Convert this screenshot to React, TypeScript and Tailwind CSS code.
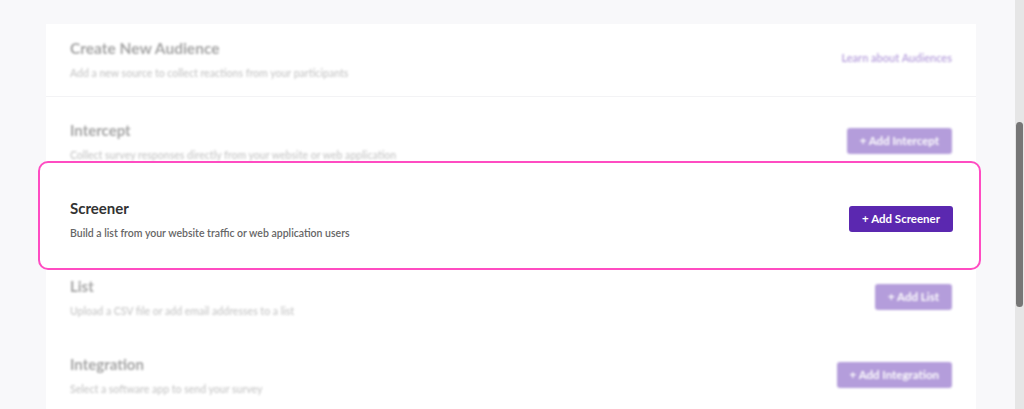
import React from 'react';

interface Row {
    title: string;
    subtitle: string;
    action: string;
}

const rowsAbove: Row[] = [
    { title: 'Intercept', subtitle: 'Collect survey responses directly from your website or web application', action: '+ Add Intercept' },
];

const rowsBelow: Row[] = [
    { title: 'List', subtitle: 'Upload a CSV file or add email addresses to a list', action: '+ Add List' },
    { title: 'Integration', subtitle: 'Select a software app to send your survey', action: '+ Add Integration' },
];

const font = { fontFamily: 'Lato, "Open Sans", sans-serif' };

const AudienceRow: React.FC<{ row: Row }> = ({ row }) => (
    <div className="h-[78px] px-6 pt-[23px] pb-[13px] flex items-center justify-between">
        <div className="opacity-45 blur-[1.2px]">
            <h3 className="text-[15px] leading-[20px] font-bold text-[#333]">{row.title}</h3>
            <p className="mt-2 text-[10.5px] leading-[14px] font-semibold text-[#888]">{row.subtitle}</p>
        </div>
        <button className="opacity-45 blur-[1.2px] h-[26px] px-[13px] rounded-[3px] bg-[#5b28b0] text-white text-[11.5px] font-bold">
            {row.action}
        </button>
    </div>
);

export default function App() {
    return (
        <div className="w-full h-[409px] bg-[#f8f8fa] flex overflow-hidden" style={font}>
            <div className="flex-1 pl-[46px] pr-[39px] pt-6">
                <div className="bg-white h-full">
                    <div className="h-[73px] px-6 pt-[14px] pb-[17px] flex items-center justify-between border-b border-[#f3f3f5]">
                        <div className="opacity-45 blur-[1.2px]">
                            <h2 className="text-[15.5px] leading-[20px] font-bold text-[#333]">Create New Audience</h2>
                            <p className="mt-2 text-[10.5px] leading-[14px] font-semibold text-[#888]">Add a new source to collect reactions from your participants</p>
                        </div>
                        <a className="opacity-45 blur-[1.2px] text-[11px] font-semibold text-[#5b28b0]">Learn about Audiences</a>
                    </div>

                    {rowsAbove.map(r => <AudienceRow key={r.title} row={r} />)}

                    <div className="relative z-10 -ml-2 -mr-[5px] -mt-[14px] -mb-[17px] h-[109px] border-2 border-[#ff4cc2] rounded-[10px] bg-white pl-[30px] pr-[26px] pt-[35px] pb-[28px] flex items-center justify-between">
                        <div>
                            <h3 className="text-[15px] leading-[20px] font-bold text-[#333]">Screener</h3>
                            <p className="mt-2 text-[10.5px] leading-[14px] font-semibold text-[#666]">Build a list from your website traffic or web application users</p>
                        </div>
                        <button className="h-[26px] px-[13px] rounded-[3px] bg-[#5b28b0] text-white text-[11.5px] font-bold">
                            + Add Screener
                        </button>
                    </div>

                    {rowsBelow.map(r => <AudienceRow key={r.title} row={r} />)}
                </div>
            </div>
            <div className="w-[9px] bg-[#e6e6e6] pt-[122px]">
                <div className="ml-px w-[7px] h-[185px] rounded-full bg-[#767676]" />
            </div>
        </div>
    );
}
